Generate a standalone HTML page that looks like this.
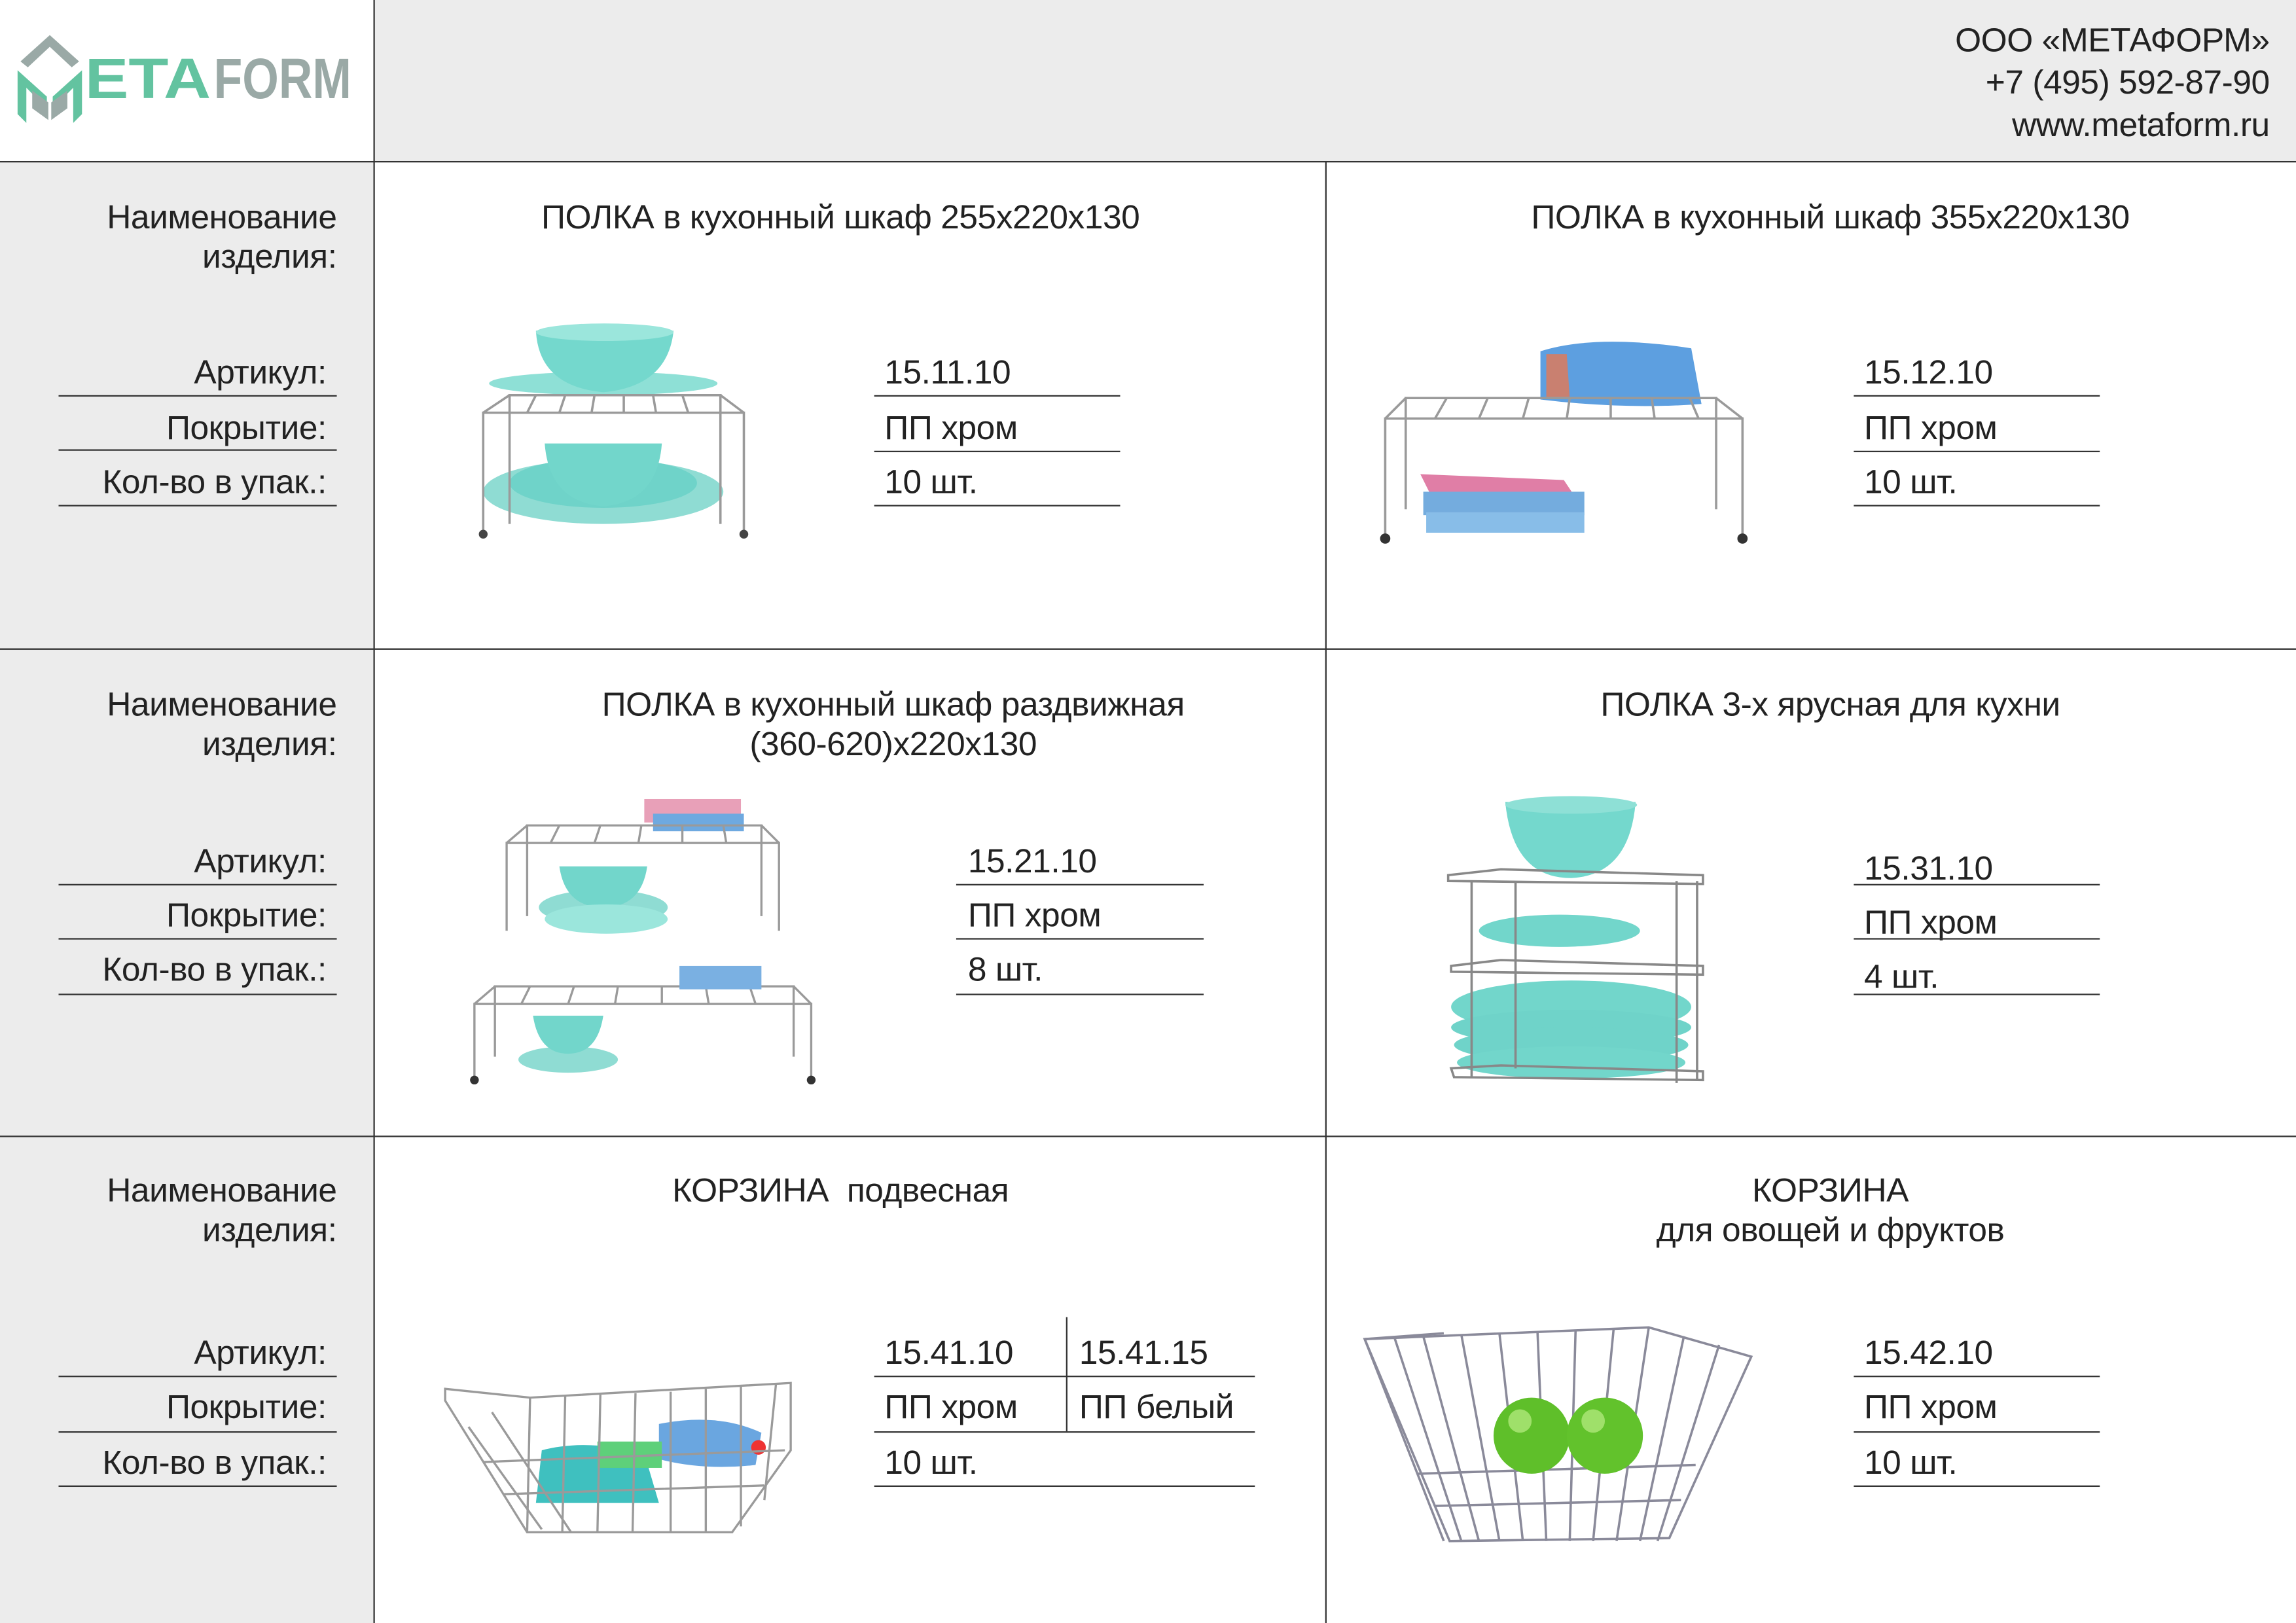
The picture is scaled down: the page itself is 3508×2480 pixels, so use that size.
<!DOCTYPE html>
<html><head><meta charset="utf-8">
<style>
html,body{margin:0;padding:0;width:3508px;height:2480px;overflow:hidden;background:#fff}
#w{position:absolute;left:0;top:0;width:1568px;height:1109px;transform:scale(2.23724,2.23625);transform-origin:0 0;font-family:"Liberation Sans","DejaVu Sans",sans-serif;color:#222}
.a{position:absolute}
.t{position:absolute;white-space:nowrap;font-size:23px;line-height:26px;letter-spacing:-0.2px}
.hl{position:absolute;height:0;border-top:1.3px solid #333}
.vl{position:absolute;width:0;border-left:1.3px solid #333}
.r{text-align:right}
.c{text-align:center}
</style></head><body><div id="w">
<div class="a" style="left:255px;top:0;width:1313px;height:110px;background:#ececec"></div>
<div class="a" style="left:0;top:110px;width:255px;height:999px;background:#ececec"></div>
<div class="hl" style="left:0;top:110px;width:1568px"></div>
<div class="hl" style="left:0;top:443px;width:1568px"></div>
<div class="hl" style="left:0;top:776px;width:1568px"></div>
<div class="vl" style="left:255px;top:0;height:1109px"></div>
<div class="vl" style="left:905px;top:110px;height:999px"></div>

<!-- logo -->
<svg class="a" style="left:10px;top:22px" width="240" height="62" viewBox="0 0 240 62">
<polygon points="24,2 44,20 39,24 24,10 9,24 4,20" fill="#9aa9a6"/>
<polygon points="2,26 2,56 8,62 8,38 22,52 22,44" fill="#63c3a0"/>
<polygon points="46,26 46,56 40,62 40,38 26,52 26,44" fill="#63c3a0"/>
<polygon points="12,50 23,58 23,70 12,62" fill="#9aa9a6" transform="translate(0,-10)"/>
<polygon points="36,50 25,58 25,70 36,62" fill="#9aa9a6" transform="translate(0,-10)"/>
<text x="48" y="45" font-family="Liberation Sans" font-weight="bold" font-size="39" fill="#63c3a0" textLength="86" lengthAdjust="spacingAndGlyphs">ETA</text>
<text x="136" y="45" font-family="Liberation Sans" font-weight="bold" font-size="39" fill="#9aa9a6" textLength="94" lengthAdjust="spacingAndGlyphs">FORM</text>
</svg>

<div class="t r" style="right:18px;top:13px;font-size:23px;line-height:29px">ООО «МЕТАФОРМ»<br>+7 (495) 592-87-90<br>www.metaform.ru</div>

<div class="t r" style="right:1338px;top:135px;line-height:27px">Наименование<br>изделия:</div>
<div class="t r" style="right:1345px;top:241px">Артикул:</div>
<div class="t r" style="right:1345px;top:279px">Покрытие:</div>
<div class="t r" style="right:1345px;top:316px">Кол-во в упак.:</div>
<div class="hl" style="left:40px;top:270px;width:190px"></div>
<div class="hl" style="left:40px;top:307px;width:190px"></div>
<div class="hl" style="left:40px;top:345px;width:190px"></div>

<div class="t r" style="right:1338px;top:468px;line-height:27px">Наименование<br>изделия:</div>
<div class="t r" style="right:1345px;top:575px">Артикул:</div>
<div class="t r" style="right:1345px;top:612px">Покрытие:</div>
<div class="t r" style="right:1345px;top:649px">Кол-во в упак.:</div>
<div class="hl" style="left:40px;top:604px;width:190px"></div>
<div class="hl" style="left:40px;top:641px;width:190px"></div>
<div class="hl" style="left:40px;top:679px;width:190px"></div>

<div class="t r" style="right:1338px;top:800px;line-height:27px">Наименование<br>изделия:</div>
<div class="t r" style="right:1345px;top:911px">Артикул:</div>
<div class="t r" style="right:1345px;top:948px">Покрытие:</div>
<div class="t r" style="right:1345px;top:986px">Кол-во в упак.:</div>
<div class="hl" style="left:40px;top:940px;width:190px"></div>
<div class="hl" style="left:40px;top:978px;width:190px"></div>
<div class="hl" style="left:40px;top:1015px;width:190px"></div>

<div class="t c" style="left:274px;width:600px;top:135px">ПОЛКА в кухонный шкаф 255х220х130</div>
<div class="t c" style="left:950px;width:600px;top:135px">ПОЛКА в кухонный шкаф 355х220х130</div>
<div class="t c" style="left:310px;width:600px;top:468px;line-height:27px">ПОЛКА в кухонный шкаф раздвижная<br>(360-620)х220х130</div>
<div class="t c" style="left:950px;width:600px;top:468px">ПОЛКА 3-х ярусная для кухни</div>
<div class="t c" style="left:274px;width:600px;top:800px">КОРЗИНА&nbsp; подвесная</div>
<div class="t c" style="left:950px;width:600px;top:800px;line-height:27px">КОРЗИНА<br>для овощей и фруктов</div>

<div class="t" style="left:604px;top:241px">15.11.10</div>
<div class="t" style="left:604px;top:279px">ПП хром</div>
<div class="t" style="left:604px;top:316px">10 шт.</div>
<div class="hl" style="left:597px;top:270px;width:168px"></div>
<div class="hl" style="left:597px;top:308px;width:168px"></div>
<div class="hl" style="left:597px;top:345px;width:168px"></div>

<div class="t" style="left:1273px;top:241px">15.12.10</div>
<div class="t" style="left:1273px;top:279px">ПП хром</div>
<div class="t" style="left:1273px;top:316px">10 шт.</div>
<div class="hl" style="left:1266px;top:270px;width:168px"></div>
<div class="hl" style="left:1266px;top:308px;width:168px"></div>
<div class="hl" style="left:1266px;top:345px;width:168px"></div>

<div class="t" style="left:661px;top:575px">15.21.10</div>
<div class="t" style="left:661px;top:612px">ПП хром</div>
<div class="t" style="left:661px;top:649px">8 шт.</div>
<div class="hl" style="left:653px;top:604px;width:169px"></div>
<div class="hl" style="left:653px;top:641px;width:169px"></div>
<div class="hl" style="left:653px;top:679px;width:169px"></div>

<div class="t" style="left:1273px;top:580px">15.31.10</div>
<div class="t" style="left:1273px;top:617px">ПП хром</div>
<div class="t" style="left:1273px;top:654px">4 шт.</div>
<div class="hl" style="left:1266px;top:604px;width:168px"></div>
<div class="hl" style="left:1266px;top:641px;width:168px"></div>
<div class="hl" style="left:1266px;top:679px;width:168px"></div>

<div class="t" style="left:604px;top:911px">15.41.10</div>
<div class="t" style="left:737px;top:911px">15.41.15</div>
<div class="t" style="left:604px;top:948px">ПП хром</div>
<div class="t" style="left:737px;top:948px">ПП белый</div>
<div class="t" style="left:604px;top:986px">10 шт.</div>
<div class="hl" style="left:597px;top:940px;width:260px"></div>
<div class="hl" style="left:597px;top:978px;width:260px"></div>
<div class="hl" style="left:597px;top:1015px;width:260px"></div>
<div class="vl" style="left:728px;top:900px;height:78px;border-left-width:1px"></div>

<div class="t" style="left:1273px;top:911px">15.42.10</div>
<div class="t" style="left:1273px;top:948px">ПП хром</div>
<div class="t" style="left:1273px;top:986px">10 шт.</div>
<div class="hl" style="left:1266px;top:940px;width:168px"></div>
<div class="hl" style="left:1266px;top:978px;width:168px"></div>
<div class="hl" style="left:1266px;top:1015px;width:168px"></div>

<svg class="a" style="left:320px;top:218px" width="200" height="158" viewBox="0 0 200 158">
<ellipse cx="92" cy="118" rx="82" ry="22" fill="#8fdcd3"/>
<ellipse cx="92" cy="112" rx="64" ry="17" fill="#6fd3c9"/>
<path d="M52 85 Q55 125 92 128 Q129 125 132 85 Z" fill="#72d6cb"/>
<ellipse cx="92" cy="44" rx="78" ry="8" fill="#8ee0d6"/>
<path d="M46 8 Q48 46 92 50 Q136 46 140 8 Z" fill="#74d8cd"/>
<ellipse cx="93" cy="9" rx="47" ry="6" fill="#9be6dc"/>
<g stroke="#9a9a9a" stroke-width="1.6" fill="none">
<path d="M10 148 V64 H188 V148"/><path d="M28 140 V52 H172 V140"/><path d="M10 64 L28 52 M188 64 L172 52"/>
<path d="M40 64 L46 52 M62 64 L66 52 M84 64 L86 52 M106 64 L106 52 M128 64 L126 52 M150 64 L146 52"/>
</g>
<circle cx="10" cy="147" r="3" fill="#444"/><circle cx="188" cy="147" r="3" fill="#444"/>
</svg>

<svg class="a" style="left:940px;top:228px" width="258" height="148" viewBox="0 0 258 148">
<path d="M112 12 Q150 0 215 10 L222 48 Q170 52 112 45 Z" fill="#5d9fe0"/>
<path d="M116 14 L130 14 L132 44 L116 44 Z" fill="#c98070"/>
<g stroke="#9a9a9a" stroke-width="1.6" fill="none">
<path d="M6 140 V58 H250 V140"/><path d="M20 120 V44 H232 V120"/><path d="M6 58 L20 44 M250 58 L232 44"/>
<path d="M40 58 L48 44 M70 58 L76 44 M100 58 L104 44 M130 58 L132 44 M160 58 L160 44 M190 58 L188 44 M220 58 L214 44"/>
</g>
<path d="M30 96 L128 100 L136 112 L38 112 Z" fill="#e07ea6"/>
<rect x="32" y="108" width="110" height="16" fill="#74acde"/>
<rect x="34" y="122" width="108" height="14" fill="#88bde8"/>
<circle cx="6" cy="140" r="3.5" fill="#333"/><circle cx="250" cy="140" r="3.5" fill="#333"/>
</svg>

<svg class="a" style="left:316px;top:542px" width="246" height="202" viewBox="0 0 246 202">
<rect x="124" y="4" width="66" height="16" fill="#e8a0b8"/><rect x="130" y="14" width="62" height="12" fill="#6ea9e0"/>
<ellipse cx="96" cy="78" rx="44" ry="12" fill="#8fdcd3"/><path d="M66 50 Q70 78 96 78 Q122 78 126 50 Z" fill="#72d6cb"/>
<ellipse cx="98" cy="86" rx="42" ry="10" fill="#9be6dc"/>
<g stroke="#9a9a9a" stroke-width="1.5" fill="none">
<path d="M30 94 V34 H216 V94"/><path d="M44 84 V22 H204 V84"/><path d="M30 34 L44 22 M216 34 L204 22"/>
<path d="M60 34 L66 22 M90 34 L94 22 M120 34 L122 22 M150 34 L150 22 M180 34 L178 22"/>
<path d="M8 196 V144 H238 V196"/><path d="M22 180 V132 H226 V180"/><path d="M8 144 L22 132 M238 144 L226 132"/>
<path d="M40 144 L46 132 M72 144 L76 132 M104 144 L106 132 M136 144 L136 132 M168 144 L166 132 M200 144 L196 132"/>
</g>
<rect x="148" y="118" width="56" height="16" fill="#7ab0e2"/>
<ellipse cx="72" cy="182" rx="34" ry="9" fill="#8fdcd3"/><path d="M48 152 Q52 178 72 178 Q92 178 96 152 Z" fill="#72d6cb"/>
<circle cx="8" cy="196" r="3" fill="#333"/><circle cx="238" cy="196" r="3" fill="#333"/>
</svg>

<svg class="a" style="left:975px;top:540px" width="195" height="210" viewBox="0 0 195 210">
<path d="M53 8 Q58 60 98 60 Q138 58 142 8 Z" fill="#74d8cd"/>
<ellipse cx="98" cy="10" rx="45" ry="6" fill="#8ee0d6"/>
<ellipse cx="90" cy="96" rx="55" ry="11" fill="#72d6cb"/>
<ellipse cx="98" cy="148" rx="82" ry="18" fill="#72d6cb"/>
<ellipse cx="98" cy="162" rx="82" ry="12" fill="#6fd3c9"/>
<ellipse cx="98" cy="174" rx="80" ry="12" fill="#6fd3c9"/>
<ellipse cx="98" cy="186" rx="78" ry="11" fill="#72d6cb"/>
<g stroke="#888" stroke-width="1.6" fill="none">
<path d="M14 58 L50 54 L188 58 L188 64 L14 62 Z"/><path d="M16 120 L50 116 L188 120 L188 126 L16 124 Z"/><path d="M16 190 L50 188 L188 192 L188 198 L18 196 Z"/>
<path d="M30 62 V196 M60 62 V190 M170 62 V200 M184 62 V198"/>
</g>
</svg>

<svg class="a" style="left:300px;top:935px" width="248" height="125" viewBox="0 0 248 125">
<path d="M150 38 Q190 30 220 44 L216 66 Q180 70 150 62 Z" fill="#6aa6e0"/>
<circle cx="218" cy="54" r="5" fill="#e33"/>
<path d="M70 56 Q100 48 140 58 L150 92 L66 92 Z" fill="#3fc0bf"/>
<rect x="108" y="50" width="44" height="18" fill="#5ed07a"/>
<g stroke="#9a9a9a" stroke-width="1.5" fill="none">
<path d="M4 14 L62 20 L240 10 L240 56 L200 112 L60 112 L4 22 Z"/>
<path d="M30 64 L236 56 M44 86 L222 80 M62 20 L60 112"/>
<path d="M86 19 L84 112 M110 18 L108 112 M134 17 L132 112 M158 16 L158 112 M182 14 L182 112 M206 12 L206 108 M230 10 L222 90"/>
<path d="M20 40 L70 110 M36 30 L90 112"/>
</g>
</svg>

<svg class="a" style="left:928px;top:903px" width="272" height="155" viewBox="0 0 272 155">
<g stroke="#8a8a9a" stroke-width="1.6" fill="none">
<path d="M4 12 L198 4 L268 24 L212 148 L62 150 Z"/>
<path d="M4 12 L58 8 M4 12 L58 150"/>
<path d="M24 10 L70 150 M44 10 L82 150 M70 9 L96 150 M96 8 L112 150 M122 7 L128 150 M148 6 L144 150 M174 5 L160 150 M198 4 L176 150 M222 10 L192 150 M246 16 L204 150"/>
<path d="M40 104 L230 98 M52 126 L220 122"/>
</g>
<circle cx="118" cy="78" r="26" fill="#5fbf2a"/><circle cx="168" cy="78" r="26" fill="#62c22c"/>
<circle cx="110" cy="68" r="8" fill="#9fe06a"/><circle cx="160" cy="68" r="8" fill="#9fe06a"/>
</svg>

</div></body></html>
